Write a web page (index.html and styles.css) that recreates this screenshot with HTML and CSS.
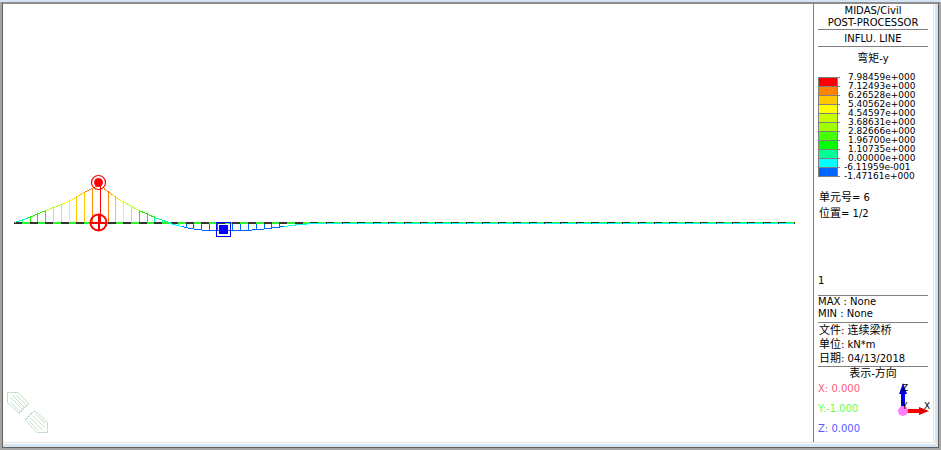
FILE: index.html
```
<!DOCTYPE html>
<html lang="zh">
<head>
    <meta charset="UTF-8">
    <meta name="viewport" content="width=device-width, initial-scale=1.0">
    <title>MIDAS/Civil</title>
    <link rel="stylesheet" href="styles.css">
</head>
<body>
    <div class="window">
        <div class="view">
            <main class="canvas">
                <svg class="model" viewBox="3 4 810 438" preserveAspectRatio="xMinYMin meet" shape-rendering="crispEdges" fill="none" role="img" aria-label="INFLU. LINE">
                    <!-- girder -->
                    <path d="M17 223H795" stroke="#2df52d" stroke-width="2"/>
                    <path d="M315 223.5H795" stroke="#00ffff"/>
                    <path d="M14 223H315" stroke="#333" stroke-width="2" stroke-dasharray="8 7.6"/>
                    <path d="M14 222.5H795" stroke="#333" stroke-dasharray="8 7.6"/>
                    <path d="M326 223.5H795" stroke="#333" stroke-dasharray="1 14.6"/>

                    <!-- ordinates, positive part -->
                    <path d="M22.5 219v3M154.5 216v6M162.5 220v2" stroke="#00ffa0"/>
                    <path d="M30.5 217v5M37.5 214v8M45.5 210v12M139.5 210v12M147.5 213v9" stroke="#28f000"/>
                    <path d="M53.5 207v15M61.5 204v18M131.5 206v16" stroke="#b4ff1e"/>
                    <path d="M69.5 201v21M123.5 201v21" stroke="#ffff00"/>
                    <path d="M76.5 196v26M84.5 192v30M115.5 196v26" stroke="#ffc800"/>
                    <path d="M92.5 188v34M108.5 191v31" stroke="#ff8200"/>
                    <path d="M100.5 184v38" stroke="#ff0000"/>

                    <!-- curve, positive part -->
                    <path d="M15 222.5L29 217.5M155 217.5L163 220.5L172 223.5" stroke="#00ffa0"/>
                    <path d="M29 217.5L46 210.5M139 210.5L155 217.5" stroke="#28f000"/>
                    <path d="M46 210.5L64 203.5M123 201.5L139 210.5" stroke="#b4ff1e"/>
                    <path d="M64 203.5L74 198.5M119 199.5L123 201.5" stroke="#ffff00"/>
                    <path d="M74 198.5L84 192.5M112 194.5L119 199.5" stroke="#ffc800"/>
                    <path d="M84 192.5L98 185.5M104 188.5L112 194.5" stroke="#ff8200"/>

                    <!-- negative part -->
                    <path d="M170 223.5L182 226.5M284 226.5L300 224.5L315 223.5M178.5 224v2M295.5 224v1" stroke="#00ffff"/>
                    <path d="M182 226.5L190 228.5L206 230.5H244L260 229.5L284 226.5" stroke="#0064ff"/>
                    <path d="M186.5 224v4M193.5 224v5M201.5 224v6M209.5 224v6M217.5 224v6M232.5 224v6M240.5 224v6M248.5 224v6M256.5 224v5M264.5 224v4M271.5 224v4M279.5 224v3" stroke="#0064ff"/>

                    <!-- minimum -->
                    <path d="M216.5 222.5h14v14h-14z" stroke="#0000ff"/>
                    <path d="M219 225h9v9h-9z" fill="#0000ff"/>

                    <!-- maximum -->
                    <g stroke="#ff0000" shape-rendering="auto">
                        <circle cx="98.5" cy="182.5" r="7" stroke-width="1.2"/>
                        <circle cx="98.5" cy="182.5" r="4" fill="#ff0000"/>
                        <circle cx="98.5" cy="222.5" r="8" stroke-width="2"/>
                        <path d="M99 214v17M90 223h17" stroke-width="2"/>
                    </g>

                    <!-- pencil mark -->
                    <g stroke="#b4d7b4" stroke-width="0.8" shape-rendering="auto">
                        <path d="M7.5 402.5V392.5H18L28.5 403.5L27.5 405.5H25.5V407.5H23.5V409.5H21.5V411.5H19.5V413.5z"/>
                        <path d="M17 395.5L26 404.500M12.500 395.500L24 407M10.500 397.500L22 409M10.500 402L20 411.500"/>
                        <path d="M34.5 410.5L47.500 422V432.500H37L25.500 420.500V418.500H27.500V416.500H29.500V414.500H31.500V412.500H33.500z"/>
                        <path d="M35 413.500L45 423M32.500 415.500L44.500 427.500M30.500 418L42.500 430M28.500 420.500L38 430"/>
                    </g>
                </svg>
            </main>

            <aside class="panel">
                <header class="title">MIDAS/Civil<br>POST-PROCESSOR</header>
                <div class="subtitle">INFLU. LINE</div>
                <div class="component"><span class="zh">弯矩</span>-y</div>
                <div class="legend">
                    <div class="scale">
                        <i class="c1"></i><i class="c2"></i><i class="c3"></i><i class="c4"></i>
                        <i class="c5"></i><i class="c6"></i><i class="c7"></i><i class="c8"></i>
                        <i class="c9"></i><i class="c10"></i><i class="c11"></i>
                    </div>
                    <ul class="values">
                        <li>7.98459e+000</li>
                        <li>7.12493e+000</li>
                        <li>6.26528e+000</li>
                        <li>5.40562e+000</li>
                        <li>4.54597e+000</li>
                        <li>3.68631e+000</li>
                        <li>2.82666e+000</li>
                        <li>1.96700e+000</li>
                        <li>1.10735e+000</li>
                        <li>0.00000e+000</li>
                        <li class="neg">-6.11959e-001</li>
                        <li class="neg">-1.47161e+000</li>
                    </ul>
                </div>
                <div class="position">
                    <p><span class="zh">单元号</span>= 6</p>
                    <p><span class="zh">位置</span>= 1/2</p>
                </div>
                <div class="stage">1</div>
                <div class="extremes">
                    <p>MAX : None</p>
                    <p>MIN : None</p>
                </div>
                <div class="file">
                    <p><span class="zh">文件</span>: <span class="zh">连续梁桥</span></p>
                    <p><span class="zh">单位</span>: kN*m</p>
                    <p><span class="zh">日期</span>: 04/13/2018</p>
                </div>
                <div class="direction">
                    <h2><span class="zh">表示</span>-<span class="zh">方向</span></h2>
                    <div class="axes">
                        <div class="coords">
                            <p class="x">X: 0.000</p>
                            <p class="y">Y:-1.000</p>
                            <p class="z">Z: 0.000</p>
                        </div>
                        <svg class="triad" width="38" height="38" viewBox="895 381 38 38">
                            <path d="M903 410V391" stroke="#0000ff" stroke-width="4"/>
                            <path d="M903 383l4 11h-8z" fill="#0000e0"/>
                            <path d="M904 411h17" stroke="#ff0000" stroke-width="4"/>
                            <path d="M929 411l-10 -4v8z" fill="#e00000"/>
                            <circle cx="903" cy="411" r="5" fill="#ff80ff"/>
                            <text x="902" y="391">Z</text>
                            <text x="902" y="409">Y</text>
                            <text x="924" y="409">X</text>
                        </svg>
                    </div>
                </div>
            </aside>
        </div>
    </div>
</body>
</html>
```

FILE: styles.css
```
* {
    box-sizing: border-box;
}

body {
    margin: 0;
    background: #fff;
    color: #000;
    font-family: "DejaVu Sans", "Noto Sans CJK SC", sans-serif;
    font-size: 10px;
    line-height: 12px;
}

p, h2, ul {
    margin: 0;
    padding: 0;
}

/* Window frame */
.window {
    height: 100vh;
    padding: 2px 2px 2px;
    background: linear-gradient(#d5e4f3 2px, #a5a5a5 2px);
    display: flex;
}

.view {
    flex: 1;
    display: flex;
    background: #fff;
    border: 1px solid #606060;
    border-top: 2px solid #8c8c8c;
    box-shadow: inset -3px -3px #d5e4f3, inset -4px -4px #fff, inset -5px -5px #e2e2e2;
    padding: 0 5px 5px 0;
}

.canvas {
    flex: 1;
    min-width: 0;
}

.model {
    display: block;
    width: 100%;
}

/* Result panel */
.panel {
    width: 120px;
    padding: 0 5px 0 4px;
    border-left: 1px solid #808080;
}

.title {
    height: 26px;
    padding-top: 1px;
    text-align: center;
    border-bottom: 1px solid #808080;
}

.subtitle {
    height: 17px;
    padding-top: 3px;
    text-align: center;
    border-bottom: 1px solid #808080;
}

.component {
    margin-top: 6px;
    text-align: center;
}

.zh {
    font-family: "Noto Sans CJK SC", sans-serif;
    font-size: 11px;
    line-height: 0;
}

.legend {
    display: flex;
    gap: 3px;
    margin-top: 8px;
}

.scale {
    width: 22px;
    margin-top: 4px;
}

.scale i {
    display: block;
    height: 9px;
    border-top: 1px solid #808080;
    border-left: 1px solid #808080;
    background: linear-gradient(90deg, var(--c) 18px, #808080 18px, #808080 19px, #fff 19px);
}

.scale .c11 {
    height: 10px;
    border-bottom: 1px solid #808080;
}

.c1 { --c: #ff0000; }
.c2 { --c: #ff8200; }
.c3 { --c: #ffc800; }
.c4 { --c: #ffff00; }
.c5 { --c: #c8ff00; }
.c6 { --c: #a0ff00; }
.c7 { --c: #46ff00; }
.c8 { --c: #00ff00; }
.c9 { --c: #00ff96; }
.c10 { --c: #00ffff; }
.c11 { --c: #0064ff; }

.values {
    list-style: none;
    font-size: 9px;
    line-height: 9px;
}

.values li {
    padding-left: 5px;
}

.values .neg {
    padding-left: 1px;
}

.position {
    margin-top: 9px;
    padding-left: 1px;
    line-height: 16px;
}

.stage {
    height: 21px;
    margin-top: 53px;
    border-bottom: 1px solid #808080;
}

.extremes {
    height: 27px;
    border-bottom: 1px solid #808080;
}

.file {
    height: 44px;
    padding: 1px 0 0 1px;
    line-height: 14px;
    border-bottom: 1px solid #808080;
}

.direction h2 {
    height: 12px;
    font-size: 10px;
    font-weight: normal;
    line-height: 14px;
    text-align: center;
}

.axes {
    display: flex;
    justify-content: space-between;
}

.coords {
    line-height: 20px;
}

.coords .x { color: #ff5a78; }
.coords .y { color: #5aff5a; }
.coords .z { color: #5a5aff; }

.triad {
    flex: none;
    margin-top: 2px;
    margin-right: -5px;
    font-size: 9px;
}
```
